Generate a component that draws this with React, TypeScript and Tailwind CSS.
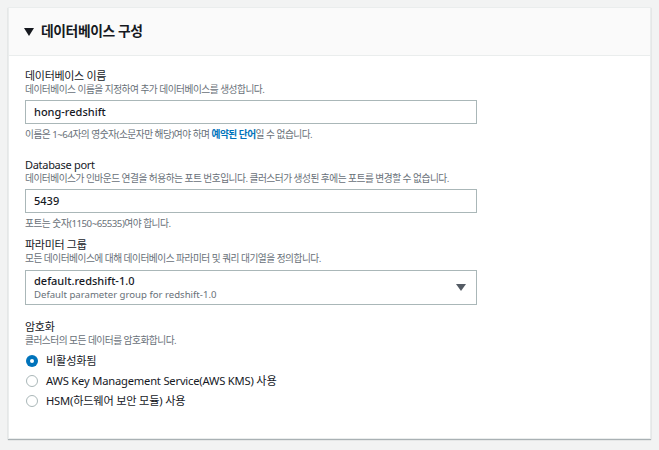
const font = { fontFamily: '"Noto Sans", "Noto Sans CJK KR", sans-serif' };

function Field({ label, desc, children }: { label: string; desc: string; children: React.ReactNode }) {
  return (
    <div>
      <div className="text-[11px] leading-[14px] text-[#16191f] tracking-[-0.3px]">{label}</div>
      <div className="text-[9.7px] leading-[14px] text-[#687078] tracking-[-0.5px]">{desc}</div>
      {children}
    </div>
  );
}

function Radio({ checked, label }: { checked?: boolean; label: string }) {
  return (
    <label className="flex h-[20px] items-center gap-[8px]">
      {checked ? (
        <span className="grid h-[12px] w-[12px] place-items-center rounded-full bg-[#0073bb]">
          <span className="h-[4px] w-[4px] rounded-full bg-white" />
        </span>
      ) : (
        <span className="h-[12px] w-[12px] rounded-full border border-[#aab7b8] bg-white" />
      )}
      <span className="text-[11.2px] text-[#16191f] tracking-[-0.2px]">{label}</span>
    </label>
  );
}

export default function App() {
  return (
    <div className="min-h-[450px] bg-[#f2f3f3] px-[8px] pt-[7px]" style={font}>
      <div className="border border-[#eaeded] bg-white shadow-[0_1px_1px_rgba(0,28,36,0.3)]">
        <div className="flex h-[48px] items-center gap-[7px] border-b border-[#eaeded] bg-[#fafafa] px-[15px]">
          <svg width="10" height="8" viewBox="0 0 10 8">
            <path d="M0 0h10L5 8z" fill="#16191f" />
          </svg>
          <h2 className="text-[13.8px] font-bold text-[#16191f] tracking-[-0.4px]">데이터베이스 구성</h2>
        </div>

        <div className="px-[16px] pb-[27px] pt-[13px]">
          <Field label="데이터베이스 이름" desc="데이터베이스 이름을 지정하여 추가 데이터베이스를 생성합니다.">
            <div className="mt-[3px] flex h-[24px] w-[452px] items-center border border-[#aab7b8] px-[8px] text-[11px] font-medium text-[#16191f]">
              hong-redshift
            </div>
            <p className="mt-[4px] text-[9.7px] leading-[14px] text-[#687078] tracking-[-0.5px]">
              이름은 1~64자의 영숫자(소문자만 해당)여야 하며{" "}
              <span className="font-bold text-[#0073bb]">예약된 단어</span>일 수 없습니다.
            </p>
          </Field>

          <div className="mt-[16px]">
            <Field
              label="Database port"
              desc="데이터베이스가 인바운드 연결을 허용하는 포트 번호입니다. 클러스터가 생성된 후에는 포트를 변경할 수 없습니다."
            >
              <div className="mt-[3px] flex h-[24px] w-[452px] items-center border border-[#aab7b8] px-[8px] text-[11px] font-medium text-[#16191f]">
                5439
              </div>
              <p className="mt-[4px] text-[9.7px] leading-[14px] text-[#687078] tracking-[-0.5px]">
                포트는 숫자(1150~65535)여야 합니다.
              </p>
            </Field>
          </div>

          <div className="mt-[7px]">
            <Field label="파라미터 그룹" desc="모든 데이터베이스에 대해 데이터베이스 파라미터 및 쿼리 대기열을 정의합니다.">
              <div className="mt-[4px] flex h-[35px] w-[452px] items-center justify-between border border-[#aab7b8] pl-[8px] pr-[10px]">
                <div>
                  <div className="text-[11px] leading-[14px] font-medium text-[#16191f]">default.redshift-1.0</div>
                  <div className="text-[9.6px] leading-[13px] text-[#687078]">Default parameter group for redshift-1.0</div>
                </div>
                <svg width="10" height="7" viewBox="0 0 10 7">
                  <path d="M0 0h10L5 7z" fill="#545b64" />
                </svg>
              </div>
            </Field>
          </div>

          <div className="mt-[15px]">
            <Field label="암호화" desc="클러스터의 모든 데이터를 암호화합니다.">
              <div className="mt-[3px] pl-[1px]">
                <Radio checked label="비활성화됨" />
                <Radio label="AWS Key Management Service(AWS KMS) 사용" />
                <Radio label="HSM(하드웨어 보안 모듈) 사용" />
              </div>
            </Field>
          </div>
        </div>
      </div>
    </div>
  );
}
